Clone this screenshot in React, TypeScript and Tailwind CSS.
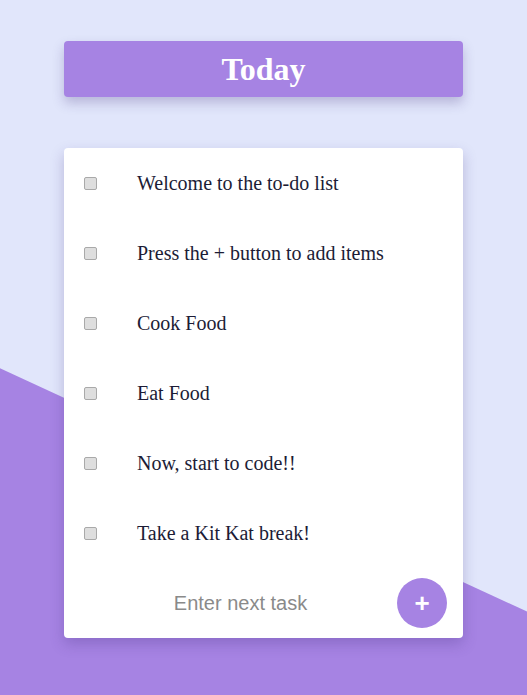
import { useState } from 'react'

const initialTasks = [
  'Welcome to the to-do list',
  'Press the + button to add items',
  'Cook Food',
  'Eat Food',
  'Now, start to code!!',
  'Take a Kit Kat break!',
]

export default function App() {
  const [tasks, setTasks] = useState(initialTasks)
  const [text, setText] = useState('')

  const addTask = () => {
    if (!text.trim()) return
    setTasks([...tasks, text.trim()])
    setText('')
  }

  return (
    <div className="relative min-h-[695px] w-full overflow-hidden bg-[#e1e6fb]">
      {/* purple slanted backdrop */}
      <div className="absolute inset-0 bg-[#a683e3] [clip-path:polygon(0_53%,100%_88%,100%_100%,0_100%)]" />

      <div className="relative flex flex-col items-center pt-[41px]">
        <div className="flex h-[56px] w-[399px] items-center justify-center rounded-[4px] bg-[#a683e3] shadow-[0_6px_12px_rgba(60,40,120,0.25)]">
          <h1 className="font-['Liberation_Serif',serif] text-[32px] font-bold text-white">Today</h1>
        </div>

        <div className="mt-[51px] w-[399px] rounded-[4px] bg-white shadow-[0_6px_14px_rgba(60,40,120,0.25)]">
          <ul>
            {tasks.map((t) => (
              <li key={t} className="flex h-[70px] items-center pl-[20px]">
                <input
                  type="checkbox"
                  className="m-0 h-[13px] w-[13px] appearance-none rounded-[2px] border border-[#a9a9a9] bg-[#dedede] checked:bg-[#a683e3]"
                />
                <span className="ml-[40px] font-['Liberation_Serif',serif] text-[20px] text-[#1c1c36]">{t}</span>
              </li>
            ))}
          </ul>
          <div className="flex h-[70px] items-center pl-[20px] pr-[16px]">
            <input
              value={text}
              onChange={(e) => setText(e.target.value)}
              placeholder="Enter next task"
              className="min-w-0 flex-1 bg-transparent text-center font-['Liberation_Sans',Arial,sans-serif] text-[20px] text-[#333] outline-none placeholder:text-[#8a8a8a]"
            />
            <button
              onClick={addTask}
              className="flex h-[50px] w-[50px] items-center justify-center rounded-full bg-[#a683e3] font-['Liberation_Sans',Arial,sans-serif] text-[26px] font-bold leading-none text-white"
            >
              +
            </button>
          </div>
        </div>
      </div>
    </div>
  )
}
